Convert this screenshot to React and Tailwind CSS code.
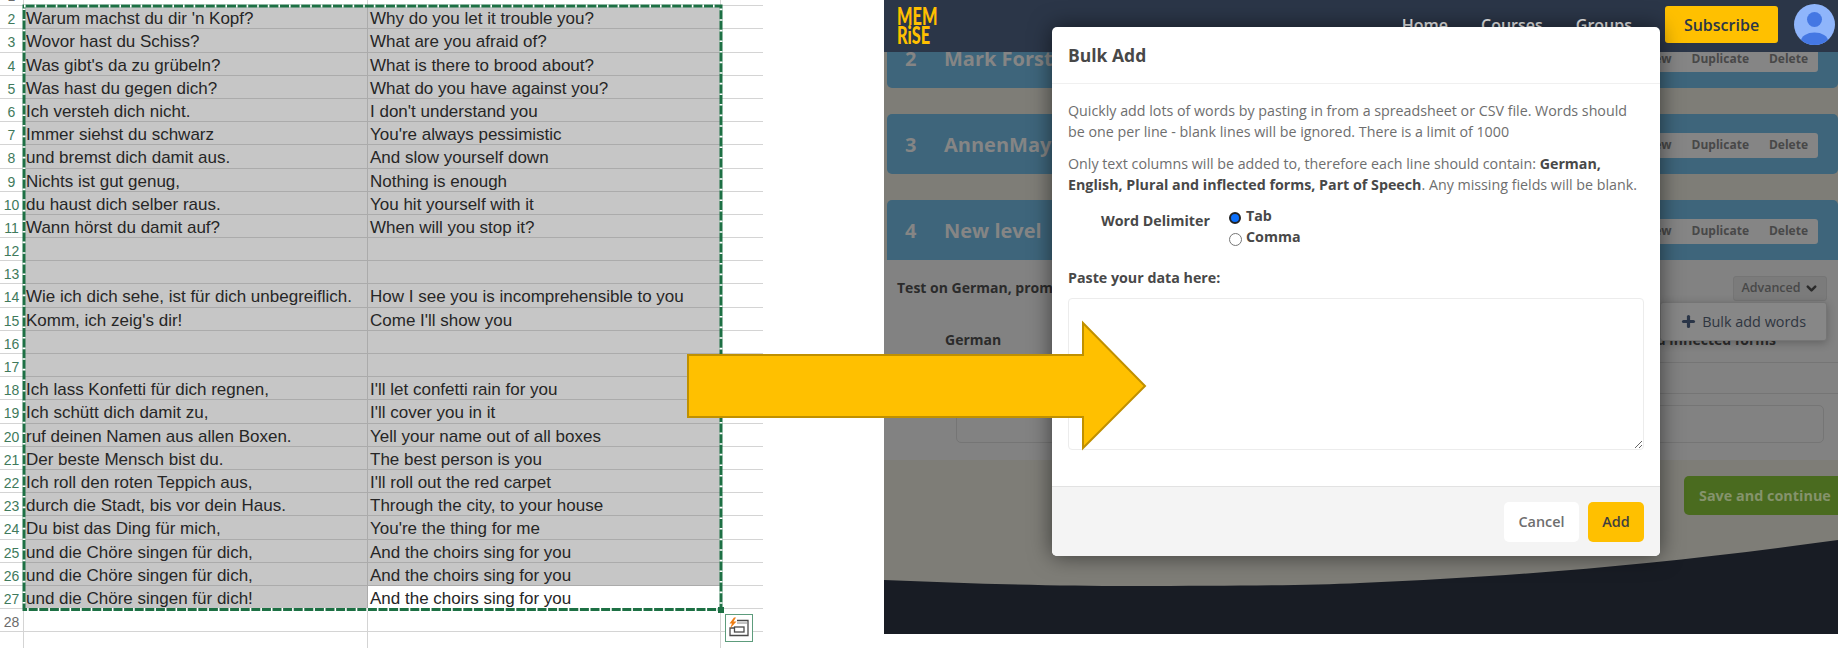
import { ChevronDown, Plus } from 'lucide-react';

const rows = [
  [2, "Warum machst du dir 'n Kopf?", 'Why do you let it trouble you?'],
  [3, 'Wovor hast du Schiss?', 'What are you afraid of?'],
  [4, "Was gibt's da zu grübeln?", 'What is there to brood about?'],
  [5, 'Was hast du gegen dich?', 'What do you have against you?'],
  [6, 'Ich versteh dich nicht.', "I don't understand you"],
  [7, 'Immer siehst du schwarz', "You're always pessimistic"],
  [8, 'und bremst dich damit aus.', 'And slow yourself down'],
  [9, 'Nichts ist gut genug,', 'Nothing is enough'],
  [10, 'du haust dich selber raus.', 'You hit yourself with it'],
  [11, 'Wann hörst du damit auf?', 'When will you stop it?'],
  [12, '', ''],
  [13, '', ''],
  [14, 'Wie ich dich sehe, ist für dich unbegreiflich.', 'How I see you is incomprehensible to you'],
  [15, "Komm, ich zeig's dir!", "Come I'll show you"],
  [16, '', ''],
  [17, '', ''],
  [18, 'Ich lass Konfetti für dich regnen,', "I'll let confetti rain for you"],
  [19, 'Ich schütt dich damit zu,', "I'll cover you in it"],
  [20, 'ruf deinen Namen aus allen Boxen.', 'Yell your name out of all boxes'],
  [21, 'Der beste Mensch bist du.', 'The best person is you'],
  [22, 'Ich roll den roten Teppich aus,', "I'll roll out the red carpet"],
  [23, 'durch die Stadt, bis vor dein Haus.', 'Through the city, to your house'],
  [24, 'Du bist das Ding für mich,', "You're the thing for me"],
  [25, 'und die Chöre singen für dich,', 'And the choirs sing for you'],
  [26, 'und die Chöre singen für dich,', 'And the choirs sing for you'],
  [27, 'und die Chöre singen für dich!', 'And the choirs sing for you'],
];

function Row({ n, a, b }) {
  const last = n === 27;
  return (
    <div className="grid grid-cols-[24px_344px_353px_42px] h-[23.2px] shrink-0">
      <div className="text-center text-[14px] leading-[24px] pt-[1px] text-[#3f7a5c] border-b border-r border-[#d4d4d4] overflow-hidden">{n}</div>
      <div className="bg-[#c6c6c6] border-b border-r border-[#ababab] pl-[2px] pt-[1px] leading-[24px] text-[#262626] whitespace-nowrap overflow-hidden">{a}</div>
      <div className={`${last ? 'bg-white' : 'bg-[#c6c6c6]'} border-b border-[#ababab] pl-[2px] pt-[1px] leading-[24px] text-[#262626] whitespace-nowrap overflow-hidden`}>{b}</div>
      <div className="border-b border-[#d4d4d4]"></div>
    </div>
  );
}

function BlankRow({ n }) {
  return (
    <div className="grid grid-cols-[24px_344px_353px_42px] h-[23.2px] shrink-0">
      <div className="text-center text-[14px] leading-[24px] pt-[1px] text-[#6b6b6b] border-b border-r border-[#d4d4d4] overflow-hidden">{n}</div>
      <div className="border-b border-r border-[#d4d4d4]"></div>
      <div className="border-b border-r border-[#d4d4d4]"></div>
      <div className="border-b border-[#d4d4d4]"></div>
    </div>
  );
}

function Sheet() {
  return (
    <div className="relative w-[763px] h-[648px] overflow-hidden text-[17px] bg-white" style={{ fontFamily: '"Liberation Sans", Arial, sans-serif' }}>
      <div className="flex flex-col -mt-[17px]">
        <BlankRow n={1} />
        {rows.map(([n, a, b]) => (
          <Row key={n} n={n} a={a} b={b} />
        ))}
        <BlankRow n={28} />
        <BlankRow n="" />
      </div>
      {/* marching ants round the copied range */}
      <svg className="absolute left-0 top-0" width="763" height="648" fill="none">
        <rect x="24" y="6" width="697" height="603.5" stroke="#1d7044" strokeWidth="3" />
        <rect x="24" y="6" width="697" height="603.5" stroke="#ffffff" strokeWidth="3" strokeDasharray="1.6 9" />
        <rect x="718" y="607" width="6" height="6" fill="#1d7044" />
      </svg>
      <div className="absolute left-[725px] top-[614px] w-[28px] h-[28px] bg-white border border-[#5d9c7c]">
        <svg width="26" height="26" viewBox="0 0 26 26" fill="none">
          <path d="M11 5.5H22V20.5H4V13H9" stroke="#4a4a4a" strokeWidth="1.3" />
          <rect x="8.5" y="12" width="9.5" height="5" stroke="#4a4a4a" strokeWidth="1.3" fill="#ffffff" />
          <path d="M11 8H22" stroke="#8a8a8a" strokeWidth="1" />
          <path d="M8 2.5L3.5 8.5H6L4 13.5L10.5 6.5H7.5L10 2.5Z" fill="#ed7d14" />
        </svg>
      </div>
    </div>
  );
}

function LevelBar({ n, title, last }) {
  return (
    <div className={`flex items-center h-[60px] ml-[3px] pt-[2px] pl-[18px] pr-[20px] bg-[#3e657b] shrink-0 ${last ? 'rounded-t-[5px]' : 'rounded-[5px] mb-[26px]'}`}>
      <span className="w-[39px] text-[20px] font-bold text-[#858585]">{n}</span>
      <span className="text-[20px] font-bold text-[#858585] whitespace-nowrap">{title}</span>
      <div className="ml-auto flex items-center gap-[20px] h-[25px] px-[10px] bg-[#858585] rounded-[3px] text-[12px] font-bold text-[#484848]">
        <span>Preview</span>
        <span>Duplicate</span>
        <span>Delete</span>
      </div>
    </div>
  );
}

function Page() {
  return (
    <div className="absolute inset-0 flex flex-col">
      <div className="relative z-10 flex items-center justify-end h-[52px] pb-[3px] pl-[13px] pr-[3px] bg-[#2b3648] shrink-0 text-white">
        <div className="mr-auto w-[44px] origin-left scale-x-[0.68] text-[24px] leading-[19px] font-black whitespace-nowrap text-[#ffc000]" style={{ fontFamily: 'Lato, sans-serif' }}>
          MEM<br />RiSE
        </div>
        <nav className="flex gap-[33px] text-[16px] font-semibold text-[#f0f0f0] mr-[33px]">
          <span>Home</span>
          <span>Courses</span>
          <span>Groups</span>
        </nav>
        <button className="w-[113px] h-[37px] mr-[16px] rounded-[3px] bg-[#ffc000] text-[16px] font-semibold text-[#2b3648]">Subscribe</button>
        <svg width="41" height="41" viewBox="0 0 41 41">
          <defs>
            <clipPath id="avatar"><circle cx="20.5" cy="20.5" r="20.5" /></clipPath>
          </defs>
          <g clipPath="url(#avatar)">
            <rect width="41" height="41" fill="#8fb5fb" />
            <circle cx="20.5" cy="15.5" r="7.5" fill="#4477e3" />
            <ellipse cx="20.5" cy="37" rx="13.5" ry="8.5" fill="#4477e3" />
          </g>
        </svg>
      </div>
      <div className="flex flex-col -mt-[24px]">
        <LevelBar n="2" title="Mark Forster" />
        <LevelBar n="3" title="AnnenMayKantereit" />
        <LevelBar n="4" title="New level" last />
      </div>
      <div className="relative flex flex-col h-[200px] bg-[#828282] shrink-0">
        <div className="flex items-start justify-between pl-[13px] pr-[11px] pt-[16px] h-[54px]">
          <span className="text-[14px] font-bold text-[#2b2b2b] leading-[24px]">Test on German, prompted with English</span>
          <button className="flex items-center justify-center gap-[3px] w-[94px] h-[25px] bg-[#7b7b7b] border border-[#757575] rounded-[3px] text-[12.5px] font-semibold text-[#484848]">
            Advanced <ChevronDown size={15} strokeWidth={4} color="#2b2b2b" />
          </button>
        </div>
        <div className="flex h-[49px] pt-[15px] pl-[61px] border-b border-[#757575] text-[14px] font-bold text-[#2b2b2b]">
          <span>German</span>
          <span className="ml-auto mr-[62px]">Plural and inflected forms</span>
        </div>
        <div className="h-[31px] border-b border-[#757575]"></div>
        <div className="ml-[72px] mr-[14px] mt-[11px] h-[38px] border border-[#757575] rounded-[5px]"></div>
        <div className="absolute right-[11px] top-[42px] flex items-center justify-end gap-[5px] w-[167px] h-[39px] pr-[20px] bg-[#878787] border border-[#757575] rounded-[3px] shadow-[0_2px_8px_rgba(0,0,0,0.25)] text-[14.4px] text-[#2e3540]">
          <Plus size={17} strokeWidth={4.5} color="#2b3648" />
          Bulk add words
        </div>
      </div>
      <div className="flex justify-end pt-[16px]">
        <div className="flex items-center w-[160px] -mr-[6px] h-[39px] pl-[15px] rounded-[5px] bg-[#4a6b1f] text-[14.4px] font-bold whitespace-nowrap text-[#85936c]">
          Save and continue
        </div>
      </div>
    </div>
  );
}

function Modal() {
  return (
    <div className="absolute left-[168px] top-[27px] z-20 flex flex-col w-[608px] h-[529px] bg-white rounded-[5px] shadow-[0_0_22px_rgba(0,0,0,0.55)] overflow-hidden">
      <div className="flex items-center h-[57px] pt-[1px] px-4 border-b border-[#f0f0f0] text-[17.5px] font-bold text-[#484848] shrink-0">Bulk Add</div>
      <div className="flex-1 px-4 pt-[16px] text-[14.25px] leading-[21px] text-[#6e6e6e]">
        <p>Quickly add lots of words by pasting in from a spreadsheet or CSV file. Words should be one per line - blank lines will be ignored. There is a limit of 1000</p>
        <p className="mt-[11px]">
          Only text columns will be added to, therefore each line should contain: <b className="font-bold text-[#484848]">German, English, Plural and inflected forms, Part of Speech</b>. Any missing fields will be blank.
        </p>
        <div className="flex mt-[10px] ml-[33px] font-bold text-[#484848]">
          <span className="w-[128px] pt-[5px]">Word Delimiter</span>
          <div className="flex flex-col">
            <label className="flex items-start gap-[5px]">
              <input type="radio" name="delim" defaultChecked className="appearance-none mt-[7px] w-[12px] h-[12px] rounded-full bg-[#0b6ffb] border-2 border-[#222]" />
              Tab
            </label>
            <label className="flex items-start gap-[4px]">
              <input type="radio" name="delim" className="appearance-none mt-[7px] w-[13px] h-[13px] rounded-full bg-white border border-[#767676]" />
              Comma
            </label>
          </div>
        </div>
        <div className="mt-[20px] font-bold text-[#484848]">Paste your data here:</div>
        <textarea className="block mt-[10px] w-full h-[152px] border border-[#ececec] rounded-[4px] bg-white"></textarea>
      </div>
      <div className="flex items-center justify-end gap-[9px] h-[70px] px-4 bg-[#f4f4f4] border-t border-[#e2e2e2] shrink-0">
        <button className="w-[75px] h-[40px] rounded-[5px] bg-white text-[14.4px] font-semibold text-[#6e6e6e]">Cancel</button>
        <button className="w-[56px] h-[40px] rounded-[5px] bg-[#ffc000] text-[14.4px] font-semibold text-[#3f3f3f]">Add</button>
      </div>
    </div>
  );
}

export default function App() {
  return (
    <div className="relative flex w-[1838px] h-[648px] bg-white overflow-hidden">
      <Sheet />
      <div className="relative ml-[121px] w-[954px] h-[634px] bg-[#7e7d77] overflow-hidden" style={{ fontFamily: '"Open Sans", sans-serif' }}>
        <Page />
        <svg className="absolute left-0 bottom-0" width="954" height="94" viewBox="0 0 954 94">
          <path d="M0 40C80 43.5 170 46 246 46C350 46 420 45.5 476 43C640 36 780 24 954 0V94H0Z" fill="#181c24" />
        </svg>
        <Modal />
      </div>
      {/* callout arrow from the sheet to the dialog */}
      <svg className="absolute left-[680px] top-[318px] z-30" width="470" height="136" viewBox="0 0 470 136">
        <path d="M8 37H403V5L465 68L403 130V99H8Z" fill="#ffc000" stroke="#c09000" strokeWidth="2" />
      </svg>
    </div>
  );
}
